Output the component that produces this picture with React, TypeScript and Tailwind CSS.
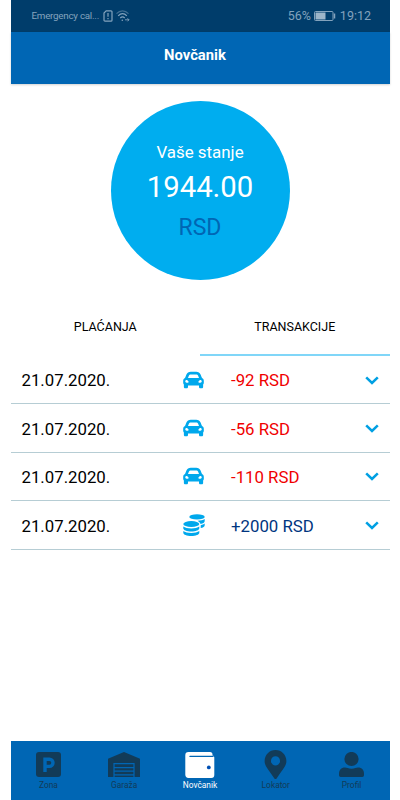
import React from 'react';
import { FaCarAlt, FaMapMarkerAlt } from 'react-icons/fa';

const transactions = [
  { id: 1, date: '21.07.2020.', amount: '-92 RSD', type: 'parking' },
  { id: 2, date: '21.07.2020.', amount: '-56 RSD', type: 'parking' },
  { id: 3, date: '21.07.2020.', amount: '-110 RSD', type: 'parking' },
  { id: 4, date: '21.07.2020.', amount: '+2000 RSD', type: 'deposit' },
];

const ParkingIcon = () => (
  <svg className="w-[25px] h-[25px]" viewBox="0 0 25 25" fill="currentColor">
    <rect width="25" height="25" rx="3" />
    <path d="M9 20V7.2h4.4a3.6 3.6 0 0 1 0 7.2H9" fill="none" stroke="#0066b4" strokeWidth="3.4" />
  </svg>
);

const GarageIcon = () => (
  <svg className="w-[32px] h-[25px]" viewBox="0 0 32 25" fill="currentColor">
    <path d="M0 25V6.8L16 0l16 6.8V25z" />
    <path d="M6 25V11.7h20V25M6 15.7h20M6 19.2h20M6 22.8h20" fill="none" stroke="#0066b4" strokeWidth="1.2" />
  </svg>
);

const WalletIcon = () => (
  <svg className="w-[30px] h-[26px]" viewBox="0 0 30 26" fill="currentColor">
    <path d="M3.5 0H25a2.5 2.5 0 0 1 2.5 2.5V3.5A2 2 0 0 1 29.3 5.6V23a3 3 0 0 1-3 3H3.5A3.3 3.3 0 0 1 .3 22.8V3.2A3.2 3.2 0 0 1 3.5 0z" />
    <path d="M5 4.4h23" fill="none" stroke="#0066b4" strokeWidth="1.4" strokeLinecap="round" />
    <circle cx="23.8" cy="15.4" r="1.9" fill="#0050b4" />
  </svg>
);

const ProfileIcon = () => (
  <svg className="w-[25px] h-[25px]" viewBox="0 0 25 25" fill="currentColor">
    <circle cx="12.5" cy="7" r="7.1" />
    <path d="M6 15.6c2 0 3.2 1.1 6.5 1.1s4.5-1.1 6.5-1.1c4 0 6 2.7 6 6.3v1.4a1.7 1.7 0 0 1-1.7 1.7H1.7A1.7 1.7 0 0 1 0 23.3v-1.4c0-3.6 2-6.3 6-6.3z" />
  </svg>
);

const CoinsIcon = () => (
  <svg className="w-[22px] h-[22px]" viewBox="0 0 22 22" fill="currentColor">
    <ellipse cx="14" cy="2.9" rx="7.7" ry="2.7" />
    <path d="M14.5 6.7c3-.1 5.700-.7 7.200-1.700v1.900c0 1.500-1.600 2.600-4.200 3-.4-1.300-1.400-2.400-3-3.200z" />
    <path d="M17.700 11.200c1.700-.3 3.100-.9 4-1.600v1.700c0 1.400-1.600 2.400-4 2.800z" />
    <ellipse cx="8.3" cy="10" rx="8" ry="3" />
    <path d="M.3 12.500c1.600 1.300 4.600 2 8 2s6.400-.7 8-2v1.700c0 2-3.500 3.200-8 3.200s-8-1.200-8-3.200z" />
    <path d="M.3 17c1.600 1.300 4.600 2 8 2s6.400-.7 8-2v1.700c0 2-3.500 3.200-8 3.200s-8-1.200-8-3.200z" />
  </svg>
);

const navItems = [
  { label: 'Zona', icon: <ParkingIcon /> },
  { label: 'Garaža', icon: <GarageIcon /> },
  { label: 'Novčanik', icon: <WalletIcon />, active: true },
  { label: 'Lokator', icon: <FaMapMarkerAlt className="w-[29px] h-[29px]" /> },
  { label: 'Profil', icon: <ProfileIcon /> },
];

function StatusBar() {
  return (
    <div className="h-[31.5px] shrink-0 bg-[#003d6b] pl-[21px] pr-[18.5px] pt-px flex items-center justify-between text-[#83a3bd]">
      <div className="flex items-center">
        <span className="w-[71px] text-[9.8px] tracking-[-0.25px] whitespace-nowrap">Emergency cal...</span>
        <svg className="w-[10px] h-[12px]" viewBox="0 0 10 12" fill="none" stroke="currentColor" strokeWidth="1.2">
          <path d="M3.2 .8H8a1 1 0 0 1 1 1v8.4a1 1 0 0 1-1 1H2a1 1 0 0 1-1-1V3z" />
          <path d="M5 3v3.8M5 8v1.3" />
        </svg>
        <svg className="ml-[3px] w-[14px] h-[12px]" viewBox="0 0 14 12" fill="none" stroke="currentColor" strokeWidth="1.2">
          <path d="M.5 3.6C4-.1 9-.1 12.5 3.6" opacity=".5" />
          <path d="M2.2 5.8c2.7-2.8 6-2.8 8.6 0" />
          <path d="M4.3 8c1.5-1.5 3-1.5 4.4 0" />
          <circle cx="6.3" cy="10.3" r=".8" fill="currentColor" stroke="none" />
          <path d="M9 9.8h4M11.5 8.3L13 9.8l-1.5 1.5" strokeWidth=".9" />
        </svg>
      </div>
      <div className="flex items-center text-[12.5px]">
        <span>56%</span>
        <svg className="ml-[3px] mr-[4px] w-[22px] h-[10px]" viewBox="0 0 22 10">
          <rect x=".5" y=".5" width="18.5" height="9" rx="1" fill="none" stroke="currentColor" />
          <rect x="1.5" y="1.5" width="10" height="7" fill="#9cb5c9" />
          <path d="M20.5 2.5v5" stroke="currentColor" strokeWidth="1.5" />
        </svg>
        <span>19:12</span>
      </div>
    </div>
  );
}

export default function App() {
  return (
    <div className="w-[400px] h-[800px] bg-white px-[10.5px] overflow-hidden font-['Roboto',sans-serif] text-black">
      <div className="h-full flex flex-col">
        <StatusBar />
        <header className="h-[52.5px] shrink-0 bg-[#0066b4] shadow-[0_1px_2px_rgba(0,0,0,0.18)] flex items-center justify-center pb-[5px] pr-[10px]">
          <h1 className="text-[14.8px] leading-5 font-bold text-white">Novčanik</h1>
        </header>

        {/* Balance */}
        <div className="mt-[17px] mx-auto w-[179px] h-[179px] shrink-0 rounded-full bg-[#00adef] text-white flex flex-col items-center pt-[38.5px]">
          <span className="text-[16.9px] leading-6">Vaše stanje</span>
          <span className="mt-[5px] text-[29.3px] leading-9">1944.00</span>
          <span className="mt-[9.5px] text-[23px] leading-7 text-[#0066b4]">RSD</span>
        </div>

        {/* Tabs */}
        <div className="mt-[19px] h-[57px] shrink-0 flex text-[12.5px]">
          <button className="flex-1 border-b-2 border-transparent pt-px">PLAĆANJA</button>
          <button className="flex-1 border-b-2 border-[#80d6f8] pt-px">TRANSAKCIJE</button>
        </div>

        <ul>
          {transactions.map((t) => (
            <li key={t.id} className="h-[48.4px] border-b border-[#b6cdd4] pl-[11px] pr-[10.5px] flex items-center text-[16.8px]">
              <span className="w-[151px] pt-[2.5px]">{t.date}</span>
              <span className="w-[58.5px] flex">
                <span className="w-[44px] flex justify-center pr-[2px] text-[#00a8ec]">
                  {t.type === 'deposit' ? <CoinsIcon /> : <FaCarAlt className="w-[21px] h-[22px]" />}
                </span>
              </span>
              <span className={t.type === 'deposit' ? 'flex-1 pt-[2.5px] text-[#003580]' : 'flex-1 pt-[2.5px] text-[#f00000]'}>{t.amount}</span>
              <svg className="mt-px w-[14px] h-[9px]" viewBox="0 0 14 9" fill="none" stroke="#00a0e3" strokeWidth="2.5">
                <path d="M1.2 1.3L7 7l5.8-5.7" />
              </svg>
            </li>
          ))}
        </ul>

        {/* Bottom navigation */}
        <nav className="mt-auto h-[59px] shrink-0 bg-[#0066b4] flex">
          {navItems.map((item) => (
            <div key={item.label} className={item.active ? 'flex-1 flex flex-col items-center text-white' : 'flex-1 flex flex-col items-center text-[#123b58]'}>
              <div className="mt-[8px] h-[31px] flex items-center">{item.icon}</div>
              <span className="text-[8.4px] leading-[11px]">{item.label}</span>
            </div>
          ))}
        </nav>
      </div>
    </div>
  );
}
